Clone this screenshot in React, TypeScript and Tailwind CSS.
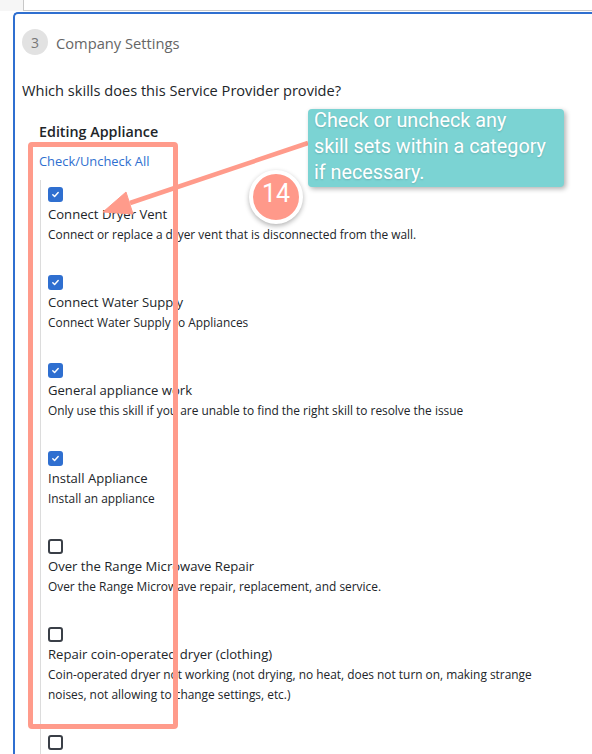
import React from 'react';

const skills = [
  { title: 'Connect Dryer Vent', desc: 'Connect or replace a dryer vent that is disconnected from the wall.', checked: true },
  { title: 'Connect Water Supply', desc: 'Connect Water Supply to Appliances', checked: true },
  { title: 'General appliance work', desc: 'Only use this skill if you are unable to find the right skill to resolve the issue', checked: true },
  { title: 'Install Appliance', desc: 'Install an appliance', checked: true },
  { title: 'Over the Range Microwave Repair', desc: 'Over the Range Microwave repair, replacement, and service.', checked: false },
  {
    title: 'Repair coin-operated dryer (clothing)',
    desc: 'Coin-operated dryer not working (not drying, no heat, does not turn on, making strange noises, not allowing to change settings, etc.)',
    checked: false,
  },
  { title: 'Repair coin-operated washer (clothing)', desc: 'Coin-operated washer not working', checked: false },
];

const Checkbox = ({ checked }: { checked: boolean }) =>
  checked ? (
    <div className="flex h-[15px] w-[15px] items-center justify-center rounded-[3px] bg-[#2f6fd0]">
      <svg width="9" height="9" viewBox="0 0 10 10" fill="none">
        <path d="M2 5.2l2 2 4-4.4" stroke="white" strokeWidth="1.6" strokeLinecap="round" strokeLinejoin="round" />
      </svg>
    </div>
  ) : (
    <div className="h-[15px] w-[15px] rounded-[3px] border-2 border-[#3a3f47] bg-white" />
  );

export default function App() {
  return (
    <div className="relative h-[754px] w-[592px] overflow-hidden bg-white font-['Open_Sans','Noto_Sans',sans-serif] text-[#212529]">
      {/* previous panel edge */}
      <div className="flex h-[11px]">
        <div className="w-[23px] bg-[#f6f6f6]" />
        <div className="flex-1 border-b border-l border-[#c8c8c8]" />
      </div>

      {/* step card */}
      <div className="-mr-[20px] mt-px ml-[13px] rounded-tl-[5px] border-l-2 border-t-2 border-[#2f6fd0] pl-[7px]">
        <div className="flex items-center gap-[8px] pt-[15px]">
          <div className="flex h-[26px] w-[26px] items-center justify-center rounded-full bg-[#e2e2e2] text-[14px] text-[#777]">3</div>
          <div className="mt-[3px] text-[14.7px] text-[#666]">Company Settings</div>
        </div>

        <div className="mt-[25px] text-[14.6px] leading-[20px] font-medium">Which skills does this Service Provider provide?</div>

        <div className="mt-[21px] ml-[17px] text-[14.3px] leading-[22px] font-semibold">Editing Appliance</div>
        <div className="mt-[8px] ml-[17px] text-[12.9px] leading-[20px] text-[#2f6fd0]">Check/Uncheck All</div>

        <div className="mt-[9px] ml-[18px] border-l border-[#dcdcdc] pt-[7px] pl-[7px]">
          {skills.map((s) => (
            <div key={s.title} className="pb-[31px]">
              <Checkbox checked={s.checked} />
              <div className="mt-[2px] text-[13.1px] leading-[20px]">{s.title}</div>
              <div className="max-w-[520px] text-[11.9px] leading-[20px]">{s.desc}</div>
            </div>
          ))}
        </div>
      </div>

      {/* annotation: highlight box */}
      <div className="pointer-events-none absolute left-[28px] top-[142px] h-[587px] w-[150px] rounded-[4px] border-[5px] border-[#ff9b8b]" />

      {/* annotation: arrow */}
      <svg className="pointer-events-none absolute inset-0" width="592" height="754" viewBox="0 0 592 754">
        <line x1="308" y1="143" x2="130" y2="203" stroke="#ff9b8b" strokeWidth="4.5" />
        <polygon points="103,212 133,214 126,192" fill="#ff9b8b" stroke="#ff9b8b" strokeWidth="1" strokeLinejoin="round" />
      </svg>

      {/* annotation: step badge */}
      <div className="pointer-events-none absolute left-[249px] top-[170px] flex h-[54px] w-[54px] items-center justify-center rounded-full border-4 border-white bg-[#ff998a] shadow-[0_2px_5px_rgba(0,0,0,0.3)]">
        <span className="-mt-[6px] font-['Roboto',sans-serif] text-[25px] text-white">14</span>
      </div>

      {/* annotation: tooltip */}
      <div className="pointer-events-none absolute left-[308px] top-[109px] h-[78px] w-[256px] rounded-[4px] bg-[#7bd3d3] px-[6px] font-['Roboto',sans-serif] text-[19.8px] leading-[26px] text-white shadow-[2px_2px_5px_rgba(0,0,0,0.3)] [text-shadow:0_1px_2px_rgba(0,0,0,0.15)]">
        <div className="-mt-[1px]">Check or uncheck any</div>
        <div>skill sets within a category</div>
        <div>if necessary.</div>
      </div>
    </div>
  );
}
